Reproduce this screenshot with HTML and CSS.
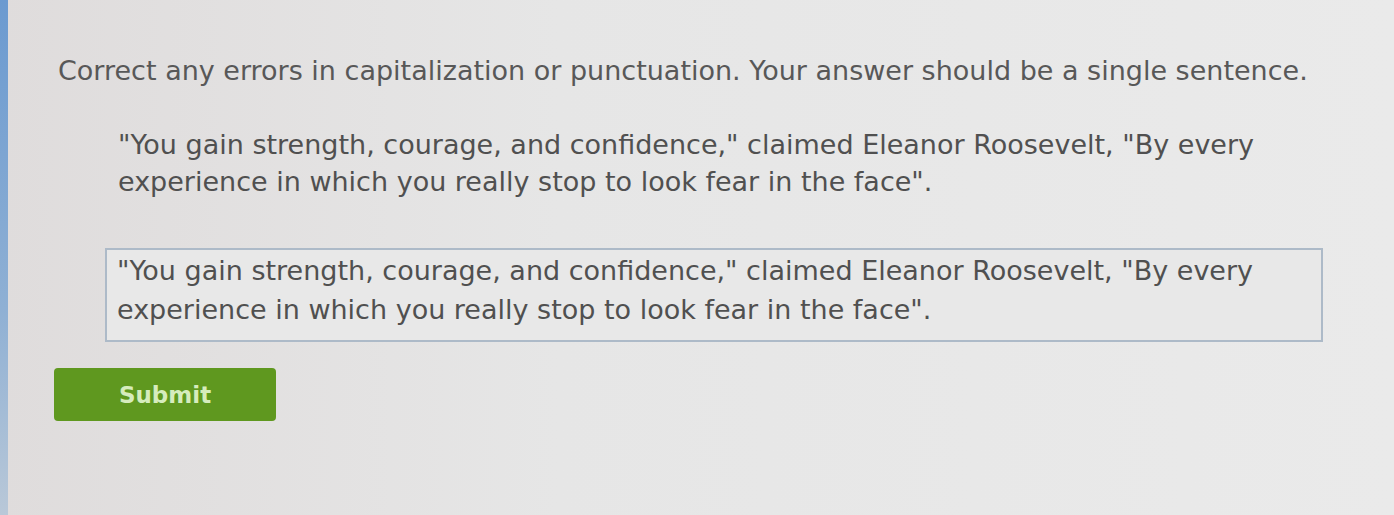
FILE: index.html
```html
<!DOCTYPE html>
<html>
<head>
<meta charset="utf-8">
<link rel="stylesheet" href="styles.css">
</head>
<body>
<div class="edge"></div>
<main class="page">
  <p class="prompt">Correct any errors in capitalization or punctuation. Your answer should be a single sentence.</p>
  <p class="quote">"You gain strength, courage, and confidence," claimed Eleanor Roosevelt, "By every<br>experience in which you really stop to look fear in the face".</p>
  <div class="answer">"You gain strength, courage, and confidence," claimed Eleanor Roosevelt, "By every<br>experience in which you really stop to look fear in the face".</div>
  <button class="submit">Submit</button>
</main>
</body>
</html>
```
FILE: styles.css
```css
html, body {
  margin: 0;
  padding: 0;
  height: 100%;
}
body {
  background: linear-gradient(90deg, #dfdcdc 0%, #e6e6e6 40%, #eaeaea 100%);
  font-family: "DejaVu Sans", Verdana, sans-serif;
  color: #585858;
  display: flex;
  overflow: hidden;
}
.edge {
  width: 8px;
  flex: none;
  background: linear-gradient(180deg, #6b9ad0, #8fb0d4 60%, #b9c8d8);
}
.page {
  flex: 1;
  padding: 52px 0 0 50px;
}
.prompt {
  margin: 0;
  font-size: 27px;
  line-height: 37px;
  white-space: nowrap;
}
.quote {
  margin: 37px 0 0 60px;
  font-size: 27px;
  line-height: 37px;
  color: #505050;
  white-space: nowrap;
}
.answer {
  margin: 48px 0 0 47px;
  width: 1218px;
  box-sizing: border-box;
  height: 94px;
  border: 2px solid #adbac8;
  background: #e8e8e8;
  padding: 1px 10px 0;
  font-size: 27px;
  line-height: 39px;
  color: #505050;
  white-space: nowrap;
}
.submit {
  display: block;
  margin: 26px 0 0 -4px;
  width: 222px;
  height: 53px;
  border: none;
  border-radius: 4px;
  background: #5f981f;
  color: #d6ecbd;
  font-family: "DejaVu Sans", Verdana, sans-serif;
  font-size: 23px;
  font-weight: bold;
  padding: 0;
}
```
